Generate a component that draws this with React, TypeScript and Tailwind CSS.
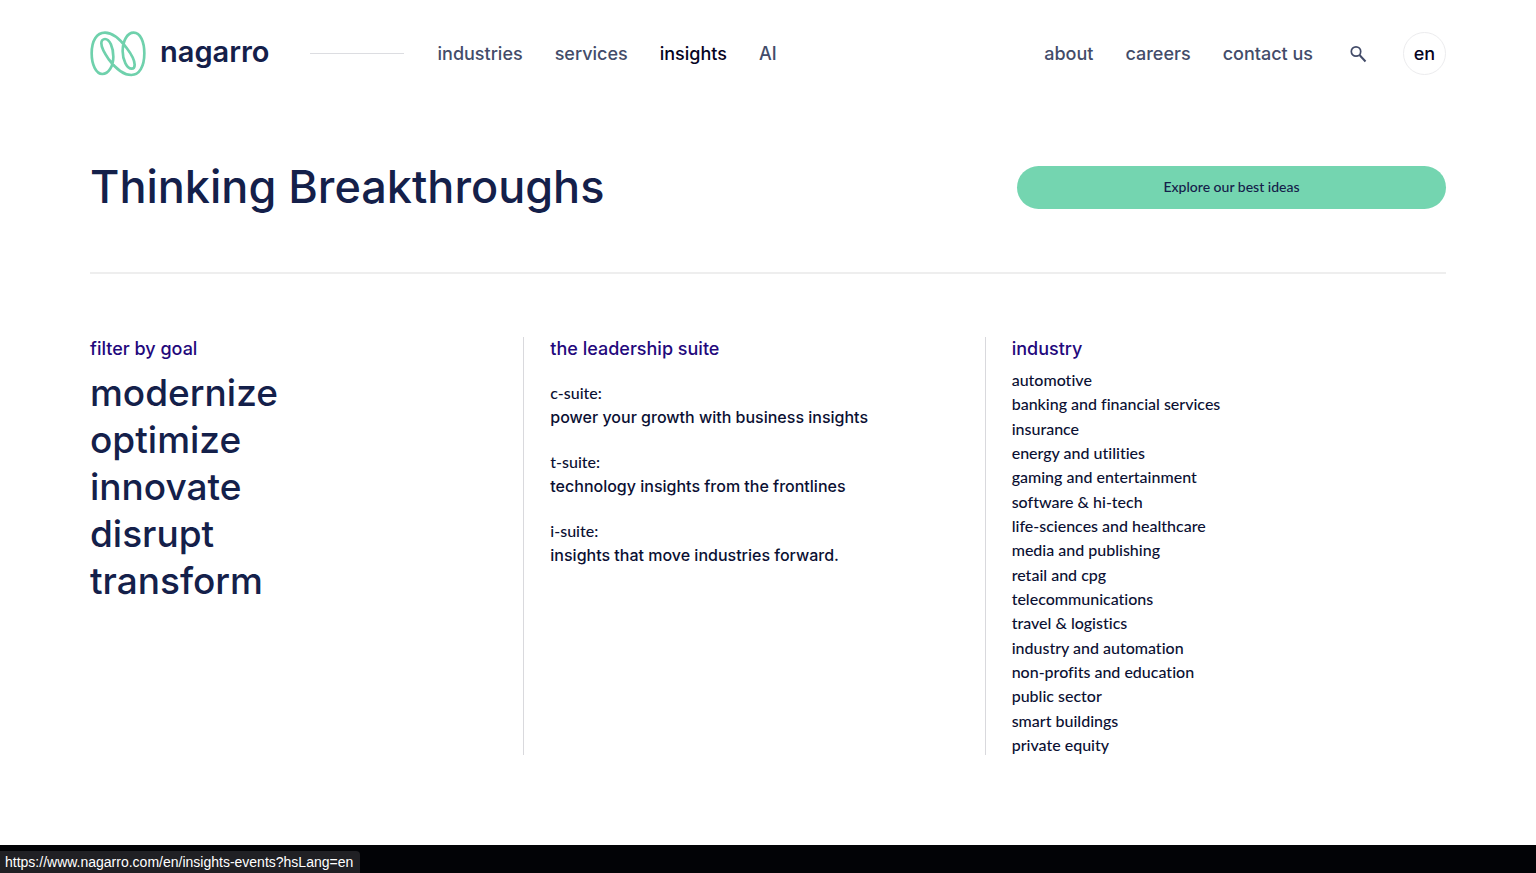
import React from 'react';

const mainLinks = ['industries', 'services', 'insights', 'AI'];
const sideLinks = ['about', 'careers', 'contact us'];
const goals = ['modernize', 'optimize', 'innovate', 'disrupt', 'transform'];

const suites = [
  { name: 'c-suite:', text: 'power your growth with business insights' },
  { name: 't-suite:', text: 'technology insights from the frontlines' },
  { name: 'i-suite:', text: 'insights that move industries forward.' },
];

const industries = [
  'automotive',
  'banking and financial services',
  'insurance',
  'energy and utilities',
  'gaming and entertainment',
  'software & hi-tech',
  'life-sciences and healthcare',
  'media and publishing',
  'retail and cpg',
  'telecommunications',
  'travel & logistics',
  'industry and automation',
  'non-profits and education',
  'public sector',
  'smart buildings',
  'private equity',
];

const Logo: React.FC = () => (
  <a href="#" className="flex items-center gap-[14px]">
    <svg className="w-14 h-[46px]" viewBox="29 33 168 138" fill="none" stroke="#6fd1ac" strokeWidth={8}>
      <path d="M66 162C47 162 34 134 34 100C34 62 49 38 74 38C99 38 121 60 139 84C155 105 163 122 163 134C163 142 159 146 154 146C140 146 127 121 127 94C127 62 141 38 160 38C180 38 192 65 192 100C192 140 177 165 153 165C127 165 104 143 86 119C71 98 63 82 63 70C63 62 68 57 74 57C88 57 99 82 99 110C99 140 84 162 66 162Z" />
    </svg>
    <span className="text-[29px] leading-8 pb-[3px] font-semibold text-[#14204a]">nagarro</span>
  </a>
);

const Header: React.FC = () => (
  <header className="flex items-center h-[107px] text-lg font-medium text-[#434c69]">
    <Logo />
    <span className="w-[94px] h-px ml-10 mr-[34px] bg-[#dcdde1]" />
    <nav className="flex gap-8">
      {mainLinks.map((link) => (
        <a key={link} href="#" className={link === 'insights' ? 'text-[#06041f]' : ''}>
          {link}
        </a>
      ))}
    </nav>
    <nav className="flex gap-8 ml-auto">
      {sideLinks.map((link) => (
        <a key={link} href="#">{link}</a>
      ))}
    </nav>
    <button type="button" aria-label="search" className="ml-9">
      <svg className="w-[18px] h-[18px]" viewBox="0 0 18 18" fill="none" stroke="#434c69">
        <circle cx="7" cy="6.5" r="4.7" strokeWidth={1.7} />
        <path d="M10.5 10l6 6.5" strokeWidth={2} />
      </svg>
    </button>
    <button type="button" className="w-[43px] h-[43px] ml-9 rounded-full border border-[#ececee] text-[#06041f]">
      en
    </button>
  </header>
);

const App: React.FC = () => {
  return (
    <div className="min-h-screen flex flex-col bg-white font-['Inter',sans-serif] text-[#14204a]">
      <div className="flex-1 px-[90px]">
        <Header />

        <main>
          <section className="flex items-center justify-between h-[167px] pb-1 border-b-2 border-[#eeeeee]">
            <h1 className="text-[45px] leading-[48px] pb-0.5 font-medium">Thinking Breakthroughs</h1>
            <button type="button" className="w-[429px] h-[43px] pb-0.5 rounded-full bg-[#74d5b0] font-['Lato',sans-serif] text-sm font-medium">
              Explore our best ideas
            </button>
          </section>

          <section className="grid grid-cols-3 min-h-[418px] mt-[63px] mb-[90px] -ml-7">
            <div className="border-l border-transparent pl-[27px]">
              <h2 className="text-lg leading-6 font-medium text-[#23087c]">filter by goal</h2>
              <ul className="mt-2 text-[37px] font-medium">
                {goals.map((goal) => (
                  <li key={goal} className="leading-[47px]">
                    <a href="#">{goal}</a>
                  </li>
                ))}
              </ul>
            </div>

            <div className="border-l border-[#d9d9dd] pl-[26px]">
              <h2 className="text-lg leading-6 font-medium text-[#23087c]">the leadership suite</h2>
              <div className="mt-5 flex flex-col gap-[21px] text-base font-medium text-[#0b1033]">
                {suites.map((suite) => (
                  <div key={suite.name}>
                    <p className="font-['Lato',sans-serif] leading-6">{suite.name}</p>
                    <a href="#" className="block leading-6">{suite.text}</a>
                  </div>
                ))}
              </div>
            </div>

            <div className="flex flex-col border-l border-[#d9d9dd] pl-[26px]">
              <h2 className="mb-[10px] text-lg leading-6 font-medium text-[#23087c]">industry</h2>
              <ul className="flex-1 flex flex-col justify-between pb-px font-['Lato',sans-serif] text-base font-medium text-[#0b1033] [font-variant-ligatures:no-common-ligatures]">
                {industries.map((industry) => (
                  <li key={industry} className="leading-[18px]">
                    <a href="#">{industry}</a>
                  </li>
                ))}
              </ul>
            </div>
          </section>
        </main>
      </div>

      <footer className="h-7 bg-[#020306]" />

      <div className="fixed bottom-0 left-0 h-[22px] pl-[5px] pr-[7px] rounded-tr bg-[#202024] font-['Liberation_Sans',sans-serif] text-sm leading-[22px] text-white">
        https://www.nagarro.com/en/insights-events?hsLang=en
      </div>
    </div>
  );
};

export default App;
